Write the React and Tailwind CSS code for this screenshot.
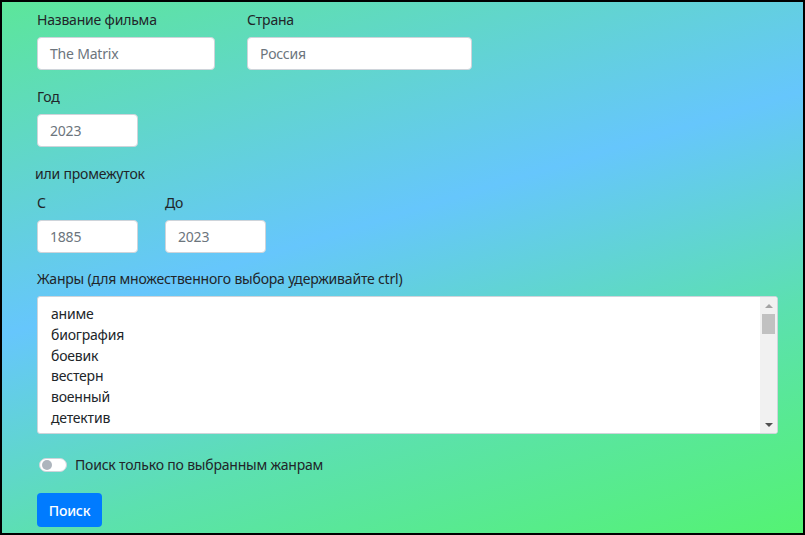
import React from "react";

const genres = ["аниме", "биография", "боевик", "вестерн", "военный", "детектив"];

function Field({ label, value, w }) {
  return (
    <div className="flex flex-col">
      <label className="h-[21px] leading-[21px]">{label}</label>
      <div className={`mt-[7px] h-[33px] ${w} rounded-[4px] border border-[#ced4da] bg-white pl-[12px] leading-[31px] text-[#6c757d]`}>
        {value}
      </div>
    </div>
  );
}

export default function App() {
  return (
    <div
      className="box-border h-[535px] w-[805px] overflow-hidden border-2 border-black bg-[linear-gradient(163deg,#5ce69a_0%,#66c6fc_43%,#5ce0b0_70%,#54f373_100%)] pl-[35px] pt-[7px] text-[14px] tracking-[-0.2px] text-[#212529]"
      style={{ fontFamily: '"Noto Sans", "Open Sans", sans-serif' }}
    >
      <div className="flex gap-[32px]">
        <Field label="Название фильма" value="The Matrix" w="w-[178px]" />
        <Field label="Страна" value="Россия" w="w-[225px]" />
      </div>
      <div className="mt-[16px]">
        <Field label="Год" value="2023" w="w-[101px]" />
      </div>
      <div className="mt-[16px] h-[21px] leading-[21px] -ml-[2px]">или промежуток</div>
      <div className="mt-[8px] flex gap-[27px]">
        <Field label="С" value="1885" w="w-[101px]" />
        <Field label="До" value="2023" w="w-[101px]" />
      </div>
      <div className="mt-[15px] h-[21px] leading-[21px]">Жанры (для множественного выбора удерживайте ctrl)</div>
      <div className="mt-[7px] flex h-[138px] w-[741px] overflow-hidden rounded-[3px] border border-[#ced4da] bg-white">
        <div className="flex-1 overflow-hidden pl-[13px] pt-[7px]">
          {genres.map((g) => (
            <div key={g} className="h-[20.8px] leading-[20.8px]">{g}</div>
          ))}
        </div>
        <div className="flex w-[17px] flex-col items-center bg-[#f1f1f1]">
          <div className="flex h-[17px] items-center justify-center">
            <div className="h-0 w-0 border-x-[4px] border-b-[4px] border-x-transparent border-b-[#a3a3a3]" />
          </div>
          <div className="h-[20px] w-[13px] bg-[#c1c1c1]" />
          <div className="flex-1" />
          <div className="flex h-[17px] items-center justify-center">
            <div className="h-0 w-0 border-x-[4px] border-t-[4px] border-x-transparent border-t-[#505050]" />
          </div>
        </div>
      </div>
      <div className="mt-[20px] flex h-[21px] items-center">
        <div className="ml-[2px] flex h-[14px] w-[28px] shrink-0 items-center rounded-full border border-[#ced4da] bg-white pl-[2px]">
          <div className="h-[10px] w-[10px] rounded-full bg-[#adb5bd]" />
        </div>
        <span className="ml-[8px] leading-[21px]">Поиск только по выбранным жанрам</span>
      </div>
      <div className="mt-[18px] flex h-[34px] w-[65px] items-center justify-center rounded-[4px] bg-[#007bff] font-medium text-white">
        Поиск
      </div>
    </div>
  );
}
